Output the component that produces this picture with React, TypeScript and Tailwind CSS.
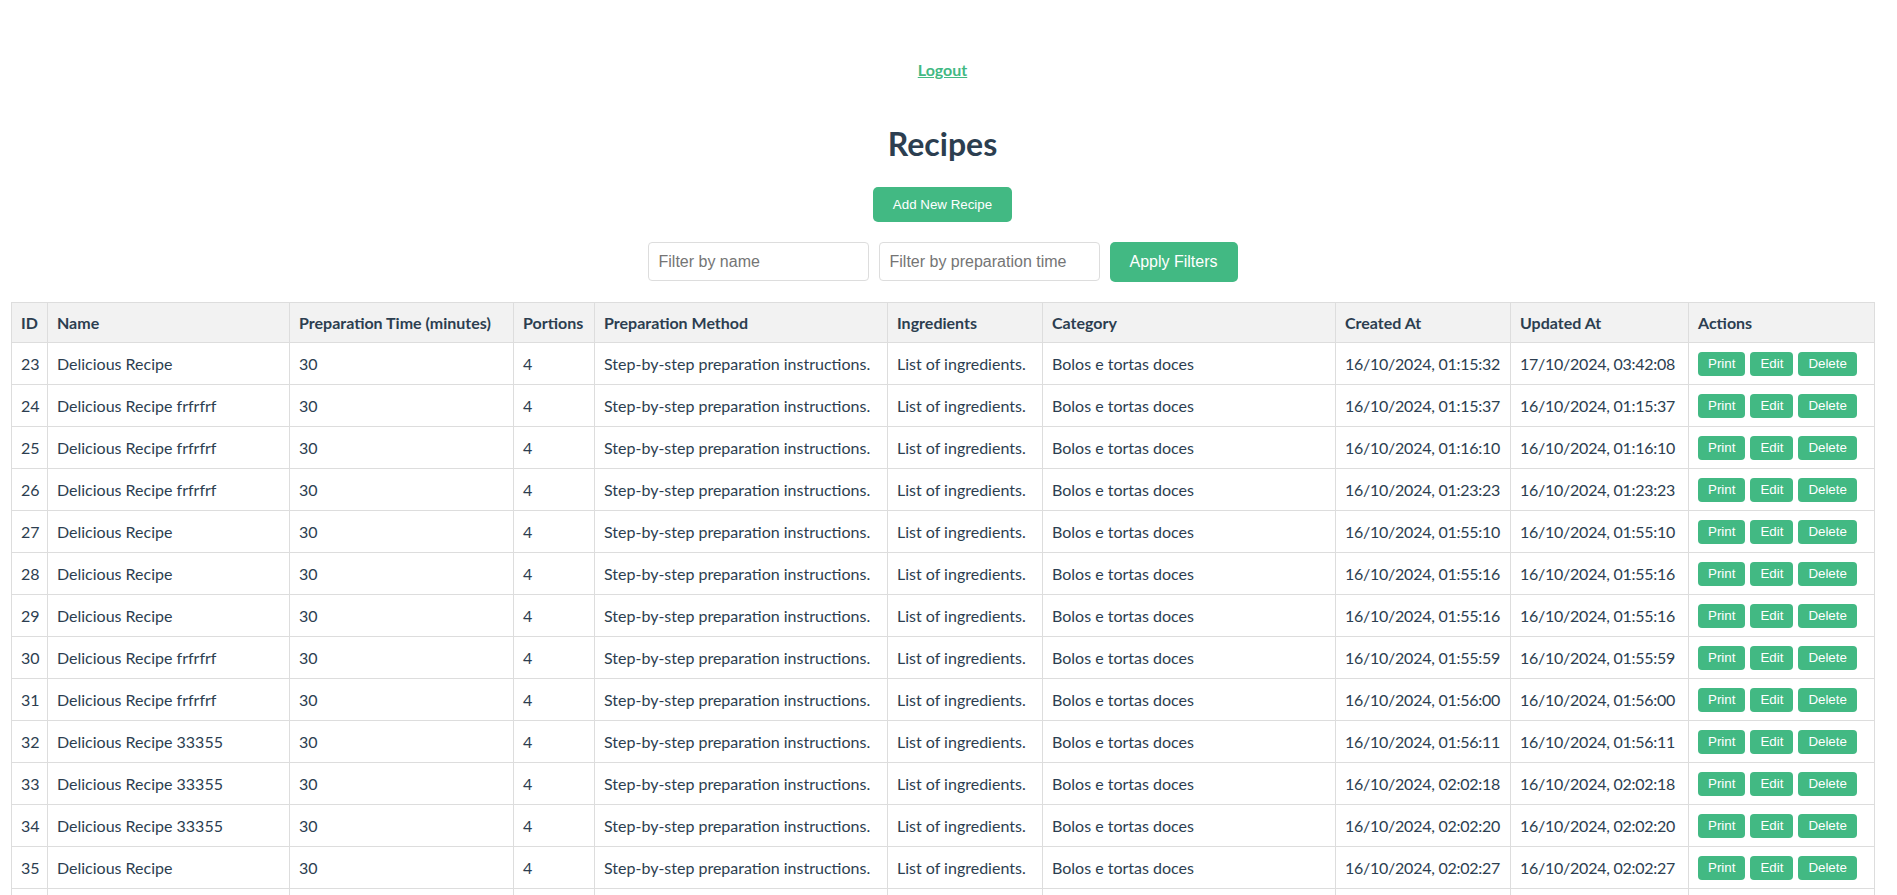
import { useState } from 'react';

type Recipe = {
  id: number;
  name: string;
  created: string;
  updated: string;
};

const recipes: Recipe[] = [
  { id: 23, name: 'Delicious Recipe', created: '16/10/2024, 01:15:32', updated: '17/10/2024, 03:42:08' },
  { id: 24, name: 'Delicious Recipe frfrfrf', created: '16/10/2024, 01:15:37', updated: '16/10/2024, 01:15:37' },
  { id: 25, name: 'Delicious Recipe frfrfrf', created: '16/10/2024, 01:16:10', updated: '16/10/2024, 01:16:10' },
  { id: 26, name: 'Delicious Recipe frfrfrf', created: '16/10/2024, 01:23:23', updated: '16/10/2024, 01:23:23' },
  { id: 27, name: 'Delicious Recipe', created: '16/10/2024, 01:55:10', updated: '16/10/2024, 01:55:10' },
  { id: 28, name: 'Delicious Recipe', created: '16/10/2024, 01:55:16', updated: '16/10/2024, 01:55:16' },
  { id: 29, name: 'Delicious Recipe', created: '16/10/2024, 01:55:16', updated: '16/10/2024, 01:55:16' },
  { id: 30, name: 'Delicious Recipe frfrfrf', created: '16/10/2024, 01:55:59', updated: '16/10/2024, 01:55:59' },
  { id: 31, name: 'Delicious Recipe frfrfrf', created: '16/10/2024, 01:56:00', updated: '16/10/2024, 01:56:00' },
  { id: 32, name: 'Delicious Recipe 33355', created: '16/10/2024, 01:56:11', updated: '16/10/2024, 01:56:11' },
  { id: 33, name: 'Delicious Recipe 33355', created: '16/10/2024, 02:02:18', updated: '16/10/2024, 02:02:18' },
  { id: 34, name: 'Delicious Recipe 33355', created: '16/10/2024, 02:02:20', updated: '16/10/2024, 02:02:20' },
  { id: 35, name: 'Delicious Recipe', created: '16/10/2024, 02:02:27', updated: '16/10/2024, 02:02:27' },
];

const columns = [
  { label: 'ID', width: 'w-[36px]' },
  { label: 'Name', width: 'w-[242px]' },
  { label: 'Preparation Time (minutes)', width: 'w-[224px]' },
  { label: 'Portions', width: 'w-[81px]' },
  { label: 'Preparation Method', width: 'w-[293px]' },
  { label: 'Ingredients', width: 'w-[155px]' },
  { label: 'Category', width: 'w-[293px]' },
  { label: 'Created At', width: 'w-[175px]' },
  { label: 'Updated At', width: 'w-[178px]' },
  { label: 'Actions', width: 'w-[186px]' },
];

const cell = 'border border-[#ddd] px-[9px] text-left align-middle whitespace-nowrap';

function SmallButton({ children }: { children: string }) {
  return (
    <button
      type="button"
      className="mr-[5px] h-[24px] rounded-[4px] bg-[#42b983] px-[10px] font-['Liberation_Sans',Arial,sans-serif] text-[13.33px] leading-none text-white hover:bg-[#369e6f]"
    >
      {children}
    </button>
  );
}

export default function App() {
  const [name, setName] = useState('');
  const [time, setTime] = useState('');

  return (
    <div className="h-[895px] w-[1885px] overflow-hidden bg-white font-['Lato','Noto_Sans',sans-serif] text-[16px] text-[#2c3e50]">
      <nav className="flex justify-center pt-[60px]">
        <a href="#" className="text-[16px] leading-[19px] font-bold text-[#42b983] underline">
          Logout
        </a>
      </nav>

      <h1 className="mt-[46px] text-center text-[32px] leading-[38px] font-bold">Recipes</h1>

      <div className="mt-[24px] flex justify-center">
        <button
          type="button"
          className="h-[35px] rounded-[5px] bg-[#42b983] px-[20px] font-['Liberation_Sans',Arial,sans-serif] text-[13.33px] text-white"
        >
          Add New Recipe
        </button>
      </div>

      <div className="mt-[20px] flex justify-center gap-[10px]">
        <input
          value={name}
          onChange={(e) => setName(e.target.value)}
          placeholder="Filter by name"
          className="h-[39px] w-[221px] rounded-[4px] border border-[#ddd] px-[10px] font-['Liberation_Sans',Arial,sans-serif] text-[16px] text-[#333] placeholder:text-[#757575] outline-none"
        />
        <input
          value={time}
          onChange={(e) => setTime(e.target.value)}
          placeholder="Filter by preparation time"
          className="h-[39px] w-[221px] rounded-[4px] border border-[#ddd] px-[10px] font-['Liberation_Sans',Arial,sans-serif] text-[16px] text-[#333] placeholder:text-[#757575] outline-none"
        />
        <button
          type="button"
          className="h-[40px] w-[128px] rounded-[5px] bg-[#42b983] font-['Liberation_Sans',Arial,sans-serif] text-[16px] text-white"
        >
          Apply Filters
        </button>
      </div>

      <table className="mx-[11px] mt-[20px] w-[1863px] table-fixed border-collapse">
        <thead>
          <tr className="bg-[#f2f2f2]">
            {columns.map((c) => (
              <th key={c.label} className={`${cell} ${c.width} h-[40px] font-bold`}>
                {c.label}
              </th>
            ))}
          </tr>
        </thead>
        <tbody>
          {recipes.map((r) => (
            <tr key={r.id}>
              <td className={`${cell} h-[42px]`}>{r.id}</td>
              <td className={cell}>{r.name}</td>
              <td className={cell}>30</td>
              <td className={cell}>4</td>
              <td className={cell}>Step-by-step preparation instructions.</td>
              <td className={cell}>List of ingredients.</td>
              <td className={cell}>Bolos e tortas doces</td>
              <td className={`${cell} tracking-[-0.25px]`}>{r.created}</td>
              <td className={`${cell} tracking-[-0.25px]`}>{r.updated}</td>
              <td className={cell}>
                <div className="flex">
                  <SmallButton>Print</SmallButton>
                  <SmallButton>Edit</SmallButton>
                  <SmallButton>Delete</SmallButton>
                </div>
              </td>
            </tr>
          ))}
          {/* next row starts just above the fold; its text falls below */}
          <tr>
            {columns.map((c) => (
              <td key={c.label} className={`${cell} h-[42px]`} />
            ))}
          </tr>
        </tbody>
      </table>
    </div>
  );
}
